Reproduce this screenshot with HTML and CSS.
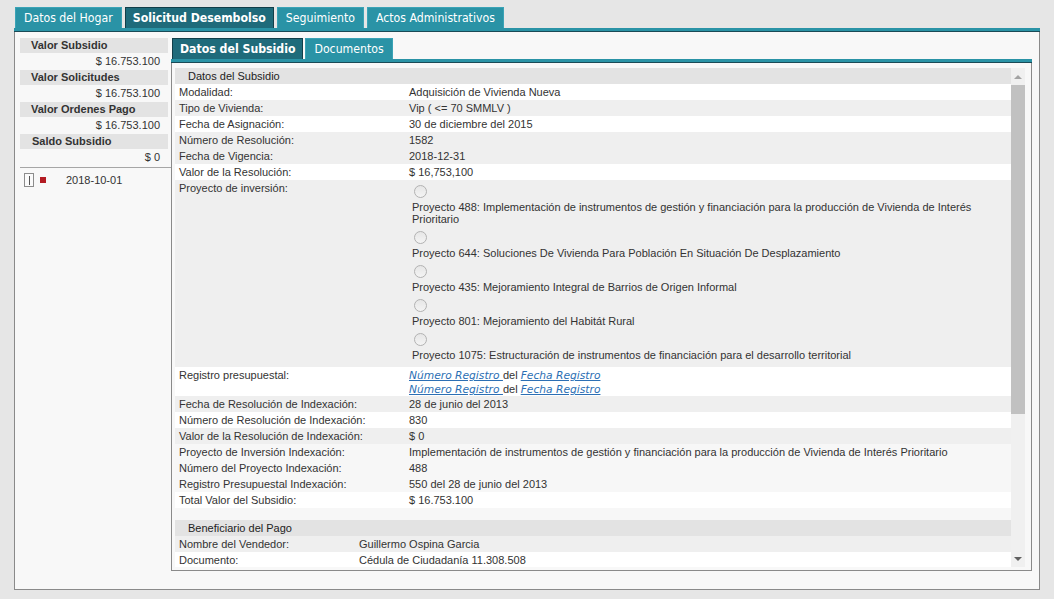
FILE: index.html
```html
<!DOCTYPE html>
<html lang="es">
<head>
<meta charset="utf-8">
<title>Solicitud Desembolso</title>
<link rel="stylesheet" href="styles.css">
</head>
<body>
<div class="page">
  <nav class="tabs outer-tabs">
    <div class="tab">Datos del Hogar</div>
    <div class="tab active">Solicitud Desembolso</div>
    <div class="tab">Seguimiento</div>
    <div class="tab">Actos Administrativos</div>
  </nav>
  <div class="panel">
    <div class="strip"></div>
    <div class="panel-body">
      <aside class="summary">
        <div class="sum-head">Valor Subsidio</div>
        <div class="sum-val">$ 16.753.100</div>
        <div class="sum-head">Valor Solicitudes</div>
        <div class="sum-val">$ 16.753.100</div>
        <div class="sum-head">Valor Ordenes Pago</div>
        <div class="sum-val">$ 16.753.100</div>
        <div class="sum-head sum-head-indent">Saldo Subsidio</div>
        <div class="sum-val">$ 0</div>
        <ul class="sum-list">
          <li class="sum-item">
            <span class="item-icon"><span class="item-bar"></span></span>
            <span class="item-mark"></span>
            <span class="item-date">2018-10-01</span>
          </li>
        </ul>
      </aside>
      <section class="detail">
        <nav class="tabs inner-tabs">
          <div class="tab active">Datos del Subsidio</div>
          <div class="tab">Documentos</div>
        </nav>
        <div class="strip inner-strip"></div>
        <div class="detail-box">
          <div class="scroller">
            <div class="scroll-content">
              <table class="grid grid-main">
                <colgroup><col class="c-label"><col></colgroup>
                <tr class="head"><td colspan="2">Datos del Subsidio</td></tr>
                <tr class="w"><td>Modalidad:</td><td>Adquisición de Vivienda Nueva</td></tr>
                <tr class="g"><td>Tipo de Vivienda:</td><td>Vip ( &lt;= 70 SMMLV )</td></tr>
                <tr class="w"><td>Fecha de Asignación:</td><td>30 de diciembre del 2015</td></tr>
                <tr class="g"><td>Número de Resolución:</td><td>1582</td></tr>
                <tr class="g"><td>Fecha de Vigencia:</td><td>2018-12-31</td></tr>
                <tr class="w"><td>Valor de la Resolución:</td><td>$ 16,753,100</td></tr>
                <tr class="g multi"><td>Proyecto de inversión:</td>
                  <td class="options">
                    <div class="option"><span class="radio"></span><span class="opt-label">Proyecto 488: Implementación de instrumentos de gestión y financiación para la producción de Vivienda de Interés Prioritario</span></div>
                    <div class="option"><span class="radio"></span><span class="opt-label">Proyecto 644: Soluciones De Vivienda Para Población En Situación De Desplazamiento</span></div>
                    <div class="option"><span class="radio"></span><span class="opt-label">Proyecto 435: Mejoramiento Integral de Barrios de Origen Informal</span></div>
                    <div class="option"><span class="radio"></span><span class="opt-label">Proyecto 801: Mejoramiento del Habitát Rural</span></div>
                    <div class="option"><span class="radio"></span><span class="opt-label">Proyecto 1075: Estructuración de instrumentos de financiación para el desarrollo territorial</span></div>
                  </td>
                </tr>
                <tr class="w multi"><td>Registro presupuestal:</td>
                  <td class="links">
                    <div class="link-line"><a class="ref" href="#">Número Registro </a> del <a class="ref" href="#">Fecha Registro </a></div>
                    <div class="link-line"><a class="ref" href="#">Número Registro </a> del <a class="ref" href="#">Fecha Registro</a></div>
                  </td>
                </tr>
                <tr class="g"><td>Fecha de Resolución de Indexación:</td><td>28 de junio del 2013</td></tr>
                <tr class="w"><td>Número de Resolución de Indexación:</td><td>830</td></tr>
                <tr class="g"><td>Valor de la Resolución de Indexación:</td><td>$ 0</td></tr>
                <tr class="n"><td>Proyecto de Inversión Indexación:</td><td>Implementación de instrumentos de gestión y financiación para la producción de Vivienda de Interés Prioritario</td></tr>
                <tr class="n"><td>Número del Proyecto Indexación:</td><td>488</td></tr>
                <tr class="n"><td>Registro Presupuestal Indexación:</td><td>550 del 28 de junio del 2013</td></tr>
                <tr class="w"><td>Total Valor del Subsidio:</td><td>$ 16.753.100</td></tr>
              </table>
              <div class="grid-gap"></div>
              <table class="grid grid-pay">
                <colgroup><col class="c-label-pay"><col></colgroup>
                <tr class="head"><td colspan="2">Beneficiario del Pago</td></tr>
                <tr class="g"><td>Nombre del Vendedor:</td><td>Guillermo Ospina Garcia</td></tr>
                <tr class="w"><td>Documento:</td><td>Cédula de Ciudadanía 11.308.508</td></tr>
              </table>
            </div>
            <div class="scrollbar">
              <div class="sb-btn"><span class="sb-up"></span></div>
              <div class="sb-thumb"></div>
              <div class="sb-track"></div>
              <div class="sb-btn"><span class="sb-down"></span></div>
            </div>
          </div>
        </div>
      </section>
    </div>
  </div>
</div>
</body>
</html>
```

FILE: styles.css
```css
* { box-sizing: border-box; }

body {
  margin: 0;
  background: #e6e6e6;
  font: 11px "Liberation Sans", Arial, sans-serif;
  color: #333;
}

.page {
  padding: 7px 0 0 14px;
  width: 1040px;
}

/* ---------- tabs ---------- */
.tabs {
  display: flex;
  gap: 3px;
  padding-left: 1px;
}

.tab {
  height: 21px;
  line-height: 20px;
  padding: 0 8px;
  border: 1px solid #3aa3b6;
  border-bottom: 0;
  background: #2a93a6;
  color: #fff;
  font-family: "DejaVu Sans Condensed", "DejaVu Sans", sans-serif;
  font-size: 12.2px;
  white-space: nowrap;
}

.tab.active {
  background: #1f6b7b;
  border-color: #123f4a;
  font-weight: bold;
  padding: 0 7px;
}

.inner-tabs { gap: 2px; }

.strip {
  height: 4px;
  background: #2a93a6;
  border-bottom: 1px solid #1a4a56;
}

/* ---------- outer panel ---------- */
.panel {
  width: 1026px;
  background: #f8f8f8;
  border: 1px solid #8a8a8a;
  border-top: 0;
}

.panel > .strip { margin: 0 -1px; }

.panel-body {
  display: flex;
  height: 557px;
  padding: 6px 7px 0 5px;
}

/* ---------- summary column ---------- */
.summary {
  width: 151px;
  flex: none;
}

.sum-head {
  height: 15px;
  line-height: 15px;
  margin-right: 3px;
  padding-left: 11px;
  background: #e3e3e3;
  font-weight: bold;
  color: #333;
}

.sum-head-indent { padding-left: 12px; }

.sum-val {
  height: 17px;
  line-height: 17px;
  text-align: right;
  padding-right: 11px;
}

.sum-list {
  list-style: none;
  margin: 1px 0 0;
  padding: 0;
  border-top: 1px solid #a6a6a6;
}

.sum-item {
  display: flex;
  align-items: center;
  height: 26px;
  padding: 5px 0 7px 4px;
}

.item-icon {
  width: 10px;
  height: 14px;
  border: 1px solid #8c8c8c;
  background: #fafafa;
  display: flex;
  justify-content: center;
  align-items: center;
}

.item-bar {
  width: 1px;
  height: 9px;
  background: #555;
}

.item-mark {
  width: 6px;
  height: 6px;
  background: #b31b22;
  margin-left: 6px;
}

.item-date { margin-left: 20px; }

/* ---------- detail ---------- */
.detail {
  width: 861px;
  flex: none;
}

.inner-tabs { padding-left: 1px; }

.detail-box {
  height: 508px;
  border: 1px solid #8a8a8a;
  border-top: 0;
  padding: 5px 6px 3px 3px;
}

.scroller {
  display: flex;
  height: 499px;
}

.scroll-content {
  flex: 1;
  overflow: hidden;
  background: #f7f7f7;
}

.scrollbar {
  width: 14px;
  flex: none;
  display: flex;
  flex-direction: column;
  background: #f0f0f0;
}

.sb-btn {
  height: 17px;
  display: flex;
  align-items: center;
  justify-content: center;
}

.sb-up {
  border-left: 4px solid transparent;
  border-right: 4px solid transparent;
  border-bottom: 4px solid #a3a3a3;
}

.sb-down {
  border-left: 4px solid transparent;
  border-right: 4px solid transparent;
  border-top: 4px solid #606060;
}

.sb-thumb {
  height: 329px;
  background: #c1c1c1;
}

.sb-track { flex: 1; }

/* ---------- data grid ---------- */
.grid {
  width: 836px;
  border-collapse: collapse;
  table-layout: fixed;
}

.c-label { width: 230px; }
.c-label-pay { width: 180px; }

.grid td {
  height: 16px;
  line-height: 16px;
  padding: 0 4px;
  vertical-align: top;
  white-space: nowrap;
}

.grid tr.head td {
  background: #e3e3e3;
  padding-left: 13px;
  color: #222;
}

.grid tr.w td { background: #fff; }
.grid tr.g td { background: #efefef; }
.grid tr.n td { background: #f7f7f7; }

.grid tr.multi td {
  line-height: 14px;
  padding-top: 1px;
}

.grid td.options {
  white-space: normal;
  padding: 0 4px 4px;
}

.option { padding: 4px 0 2px 3px; }

.radio {
  display: block;
  width: 13px;
  height: 13px;
  margin: 0 0 3px 2px;
  border: 1px solid #b2b2b2;
  border-radius: 50%;
  background: linear-gradient(#e6e6e6, #f4f4f4);
}

.opt-label {
  display: block;
  line-height: 12px;
}

.grid td.links { padding: 1px 4px 0; }

.link-line {
  height: 14px;
  line-height: 14px;
}

.ref {
  font-family: "DejaVu Sans", sans-serif;
  font-style: italic;
  font-size: 10.7px;
  line-height: 1;
  color: #2c6fb4;
  text-decoration: underline;
}

.grid-gap { height: 12px; }
```
